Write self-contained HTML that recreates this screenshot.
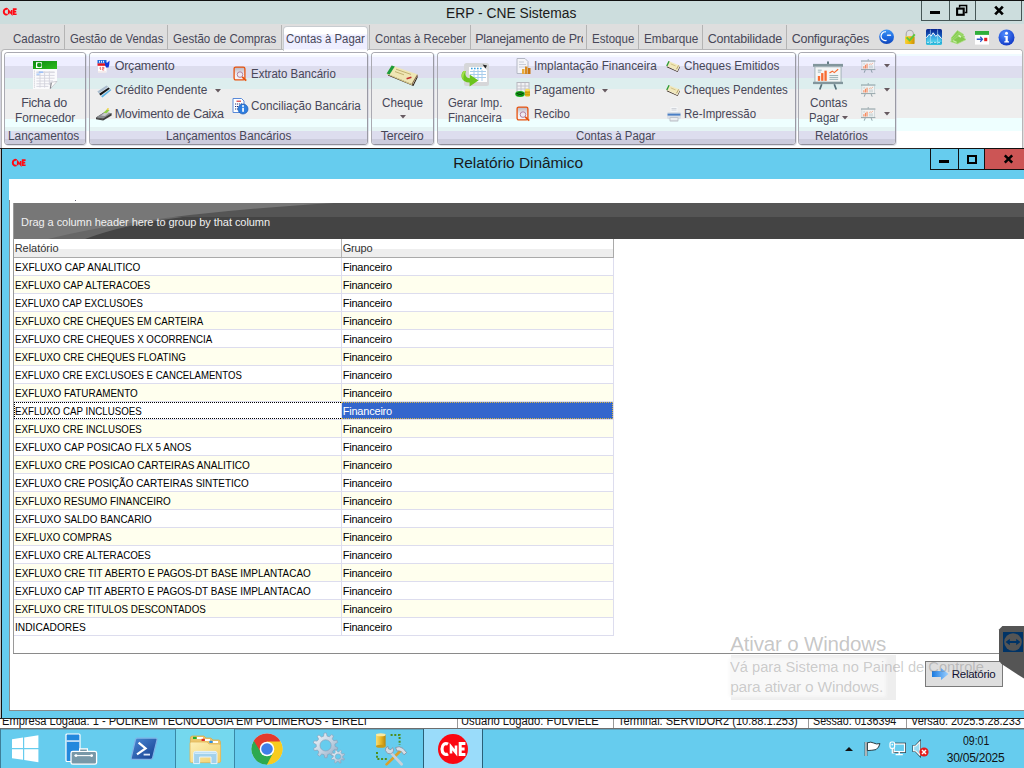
<!DOCTYPE html><html><head><meta charset="utf-8"><title>ERP - CNE Sistemas</title><style>
html,body{margin:0;padding:0;}
body{width:1024px;height:768px;overflow:hidden;background:#fff;position:relative;
 font-family:"Liberation Sans",sans-serif;}
.a{position:absolute;}
.t{position:absolute;white-space:nowrap;line-height:1;font-family:"Liberation Sans",sans-serif;}
svg{position:absolute;overflow:visible;}
.grp{position:absolute;top:52px;height:93px;border:1px solid #aaaab2;border-bottom-color:#90909a;border-right-color:#9a9aa4;border-radius:4px;box-sizing:border-box;
 box-shadow:inset 1px 1px 0 rgba(255,255,255,.9), 1px 1px 0 rgba(200,200,215,.5);overflow:hidden;}
.grp i{position:absolute;left:0;right:0;display:block;}
.sep{position:absolute;top:25px;width:1px;height:24px;background:#b4b4b4;}
.row{position:absolute;left:14px;width:599px;height:17px;border-bottom:1px solid #ddddee;}
.row b{position:absolute;left:327px;top:0;width:1px;height:18px;background:#ddddee;}
.alt{background:#ffffee;}
</style></head><body><div class="a" style="left:0px;top:0px;width:1024px;height:1px;background:#111;"></div><div class="a" style="left:0px;top:1px;width:1024px;height:23px;background:#ccdddd;"></div><svg style="left:3px;top:8px" width="14" height="7.4" viewBox="0 0 14 8" preserveAspectRatio="none"><path d="M4.6 1.2C3 .3 .8 1.4 .8 4s2.2 3.7 3.8 2.8" fill="none" stroke="#ff0a14" stroke-width="2"/><path d="M5.7 6.8V2.8L8.7 6.4V2.2" fill="none" stroke="#ff0a14" stroke-width="1.6"/><path d="M13.6 1.2H10.7V6.8H13.6M10.7 4H13.2" fill="none" stroke="#ff0a14" stroke-width="1.8"/></svg><span class="t" style="left:446.20px;top:4.88px;font-size:15.5px;color:#1a1a1a;transform:scaleX(0.8916);transform-origin:0 0;">ERP - CNE Sistemas</span><div class="a" style="left:921px;top:1px;width:101px;height:20px;border:1px solid #465656;border-top:none;box-sizing:border-box;"></div><div class="a" style="left:949px;top:1px;width:1px;height:20px;background:#465656;"></div><div class="a" style="left:975px;top:1px;width:1px;height:20px;background:#465656;"></div><div class="a" style="left:930px;top:11px;width:10px;height:3px;background:#000;"></div><svg style="left:956px;top:4px" width="12" height="12"><path d="M3.6 3.6V1.4H10.6V8.4H8.6" fill="none" stroke="#000" stroke-width="1.5"/><rect x="1.1" y="4.6" width="6.6" height="6.2" fill="none" stroke="#000" stroke-width="2.1"/></svg><svg style="left:994px;top:6px" width="10" height="9"><path d="M1.2 .6L8.8 8.4M8.8 .6L1.2 8.4" stroke="#000" stroke-width="2.7"/></svg>
<div class="a" style="left:0px;top:24px;width:1024px;height:26px;background:#dedede;"></div><div class="sep" style="left:64px"></div><div class="sep" style="left:167px"></div><div class="sep" style="left:281px"></div><div class="sep" style="left:369px"></div><div class="sep" style="left:470px"></div><div class="sep" style="left:586px"></div><div class="sep" style="left:638px"></div><div class="sep" style="left:702px"></div><div class="sep" style="left:786px"></div><span class="t" style="left:12.70px;top:33.42px;font-size:12.5px;color:#474758;transform:scaleX(0.9225);transform-origin:0 0;">Cadastro</span><span class="t" style="left:69.70px;top:33.42px;font-size:12.5px;color:#474758;transform:scaleX(0.9071);transform-origin:0 0;">Gestão de Vendas</span><span class="t" style="left:172.70px;top:33.42px;font-size:12.5px;color:#474758;transform:scaleX(0.9235);transform-origin:0 0;">Gestão de Compras</span><span class="t" style="left:374.70px;top:33.42px;font-size:12.5px;color:#474758;transform:scaleX(0.9061);transform-origin:0 0;">Contas à Receber</span><span class="t" style="left:591.70px;top:33.42px;font-size:12.5px;color:#474758;transform:scaleX(0.9221);transform-origin:0 0;">Estoque</span><span class="t" style="left:643.70px;top:33.42px;font-size:12.5px;color:#474758;transform:scaleX(0.9413);transform-origin:0 0;">Embarque</span><span class="t" style="left:707.70px;top:33.42px;font-size:12.5px;color:#474758;letter-spacing:-0.166px;">Contabilidade</span><span class="t" style="left:791.70px;top:33.42px;font-size:12.5px;color:#474758;letter-spacing:-0.255px;">Configurações</span><div class="a" style="left:470px;top:26px;width:112.7px;height:24px;overflow:hidden;"><span class="t" style="left:5.20px;top:7.42px;font-size:12.5px;color:#474758;letter-spacing:-0.234px;">Planejamento de Pro</span></div><svg style="left:879px;top:29px" width="16" height="16"><defs><linearGradient id="gb" x1="0" y1="0" x2="0" y2="1"><stop offset="0" stop-color="#3f96f4"/><stop offset=".55" stop-color="#1c68e0"/><stop offset="1" stop-color="#1246b8"/></linearGradient></defs><ellipse cx="7.6" cy="7.8" rx="7.4" ry="7.2" fill="url(#gb)"/><path d="M7 2.8A4.4 4.4 0 1 0 7.6 11.4" fill="none" stroke="#fff" stroke-width="1.2"/><rect x="7.8" y="5.4" width="4.4" height="1.7" rx=".8" fill="#e8f0ff"/></svg><svg style="left:902px;top:29px" width="15" height="16"><defs><linearGradient id="lk" x1="0" x2="1"><stop offset="0" stop-color="#f6d23a"/><stop offset=".5" stop-color="#eeb80e"/><stop offset="1" stop-color="#c8920a"/></linearGradient></defs><path d="M4.2 7.6V5A3.6 3.8 0 0 1 11.4 5V7.6" fill="none" stroke="#a8a8a8" stroke-width="1.1"/><rect x="3" y="7.2" width="9.6" height="7.8" rx=".8" fill="url(#lk)"/><path d="M4.6 8.4L7.6 11.4 12.8 5.4" fill="none" stroke="#5cc83c" stroke-width="1.9"/></svg><svg style="left:926px;top:29px" width="16" height="16"><defs><linearGradient id="ch" x1="0" y1="0" x2="0" y2="1"><stop offset="0" stop-color="#0a2690"/><stop offset=".5" stop-color="#1460c0"/><stop offset="1" stop-color="#34c8e0"/></linearGradient><linearGradient id="ch2" x1="0" y1="0" x2="0" y2="1"><stop offset="0" stop-color="#2a86dc"/><stop offset="1" stop-color="#52d4ec"/></linearGradient></defs><rect x="0" y="0" width="16" height="16" rx="1.6" fill="url(#ch)"/><path d="M.4 8.8L3.2 5.2 5 7.2 7.2 3.8 9.8 7.4 11.8 5.4 15.6 9.6V13H.4Z" fill="url(#ch2)"/><path d="M.4 8.8L3.2 5.2 5 7.2 7.2 3.8 9.8 7.4 11.8 5.4 15.6 9.6" fill="none" stroke="#fff" stroke-width="1"/><path d="M4.4 .6V15M11.6 .6V15" stroke="#bfe6f6" stroke-width=".6"/><path d="M.8 13.4H15.2" stroke="#c8f4f8" stroke-width=".9" stroke-dasharray="2.4 1.2"/></svg><svg style="left:950px;top:30px" width="17" height="14"><g stroke="#a6dc78" stroke-width=".7"><path d="M1 8.2L7.4 .6 13.6 4.4 7.2 12Z" fill="#86cc50"/><path d="M.8 10L8.8 2.6 15 6.8 7 13.2Z" fill="#8ed25a"/><path d="M.6 11.6L10.4 5 16 9.6 7.4 13.8Z" fill="#84ca4e"/></g><path d="M8.4 5.2L10.6 6.8M3 10.6L6.6 12.4" stroke="#c6eca4" stroke-width="1.2"/><rect x="8.6" y="5.6" width="2.6" height="1.6" fill="#d8f4c0" transform="rotate(35 9.9 6.4)"/></svg><svg style="left:974.5px;top:30.6px" width="14" height="13.6" viewBox="0 0 16 14" preserveAspectRatio="none"><rect x="0" y="0" width="16" height="14" fill="#fff"/><rect x="0" y="0" width="16" height="4" fill="#2fae3a"/><path d="M2 8.5H8M6 6L8.5 8.5 6 11" fill="none" stroke="#2a55c8" stroke-width="1.4"/><rect x="10.5" y="7" width="3.5" height="3.5" fill="#e02020"/></svg><svg style="left:998px;top:29px" width="17" height="17"><defs><radialGradient id="gi" cx=".4" cy=".3" r=".8"><stop offset="0" stop-color="#4f8dff"/><stop offset="1" stop-color="#0a2fc0"/></radialGradient></defs><circle cx="8.5" cy="8.5" r="8" fill="url(#gi)"/><circle cx="8.5" cy="4.3" r="1.5" fill="#fff"/><path d="M6.3 7H9.8V12.3H11V13.6H6.3V12.3H7.5V8.3H6.3Z" fill="#fff"/></svg>
<div class="a" style="left:0px;top:49px;width:1024px;height:99px;background:#dedede;"></div><div class="a" style="left:0px;top:52px;width:1px;height:96px;background:#d2d2de;"></div><div class="a" style="left:1px;top:49px;width:1022px;height:99px;background:#fff;border:1px solid #b6b6b8;border-bottom:none;border-radius:4px 4px 0 0;overflow:hidden;box-sizing:border-box;"><div class="a" style="left:2px;right:0;top:0px;height:4px;background:#ffffff"></div><div class="a" style="left:2px;right:0;top:4px;height:2px;background:#f0fbff"></div><div class="a" style="left:2px;right:0;top:6px;height:10px;background:#eeeeff"></div><div class="a" style="left:2px;right:0;top:16px;height:12px;background:#ddddee"></div><div class="a" style="left:2px;right:0;top:28px;height:11px;background:#ddeeee"></div><div class="a" style="left:2px;right:0;top:39px;height:29px;background:#eeeeee"></div><div class="a" style="left:2px;right:0;top:68px;height:13px;background:#eeffff"></div><div class="a" style="left:2px;right:0;top:81px;height:17px;background:#ffffff"></div></div><div class="grp" style="left:4px;width:82px"><i style="top:0px;height:2px;background:#ffffff"></i><i style="top:2px;height:2px;background:#f6f9ff"></i><i style="top:4px;height:9px;background:#eeeeff"></i><i style="top:13px;height:12px;background:#ddddee"></i><i style="top:25px;height:11px;background:#ddeeee"></i><i style="top:36px;height:30px;background:#eeeeee"></i><i style="top:66px;height:8px;background:#eeffff"></i><i style="top:74px;height:4px;background:#e4f3f3"></i><i style="top:78px;height:8px;background:#ddddee"></i><i style="top:86px;height:5px;background:#ccccdd"></i></div><div class="grp" style="left:89px;width:279px"><i style="top:0px;height:2px;background:#ffffff"></i><i style="top:2px;height:2px;background:#f6f9ff"></i><i style="top:4px;height:9px;background:#eeeeff"></i><i style="top:13px;height:12px;background:#ddddee"></i><i style="top:25px;height:11px;background:#ddeeee"></i><i style="top:36px;height:30px;background:#eeeeee"></i><i style="top:66px;height:8px;background:#eeffff"></i><i style="top:74px;height:4px;background:#e4f3f3"></i><i style="top:78px;height:8px;background:#ddddee"></i><i style="top:86px;height:5px;background:#ccccdd"></i></div><div class="grp" style="left:371px;width:63px"><i style="top:0px;height:2px;background:#ffffff"></i><i style="top:2px;height:2px;background:#f6f9ff"></i><i style="top:4px;height:9px;background:#eeeeff"></i><i style="top:13px;height:12px;background:#ddddee"></i><i style="top:25px;height:11px;background:#ddeeee"></i><i style="top:36px;height:30px;background:#eeeeee"></i><i style="top:66px;height:8px;background:#eeffff"></i><i style="top:74px;height:4px;background:#e4f3f3"></i><i style="top:78px;height:8px;background:#ddddee"></i><i style="top:86px;height:5px;background:#ccccdd"></i></div><div class="grp" style="left:437px;width:359px"><i style="top:0px;height:2px;background:#ffffff"></i><i style="top:2px;height:2px;background:#f6f9ff"></i><i style="top:4px;height:9px;background:#eeeeff"></i><i style="top:13px;height:12px;background:#ddddee"></i><i style="top:25px;height:11px;background:#ddeeee"></i><i style="top:36px;height:30px;background:#eeeeee"></i><i style="top:66px;height:8px;background:#eeffff"></i><i style="top:74px;height:4px;background:#e4f3f3"></i><i style="top:78px;height:8px;background:#ddddee"></i><i style="top:86px;height:5px;background:#ccccdd"></i></div><div class="grp" style="left:798px;width:98px"><i style="top:0px;height:2px;background:#ffffff"></i><i style="top:2px;height:2px;background:#f6f9ff"></i><i style="top:4px;height:9px;background:#eeeeff"></i><i style="top:13px;height:12px;background:#ddddee"></i><i style="top:25px;height:11px;background:#ddeeee"></i><i style="top:36px;height:30px;background:#eeeeee"></i><i style="top:66px;height:8px;background:#eeffff"></i><i style="top:74px;height:4px;background:#e4f3f3"></i><i style="top:78px;height:8px;background:#ddddee"></i><i style="top:86px;height:5px;background:#ccccdd"></i></div><span class="t" style="left:7.70px;top:130.42px;font-size:12.5px;color:#474758;transform:scaleX(0.9499);transform-origin:0 0;">Lançamentos</span><span class="t" style="left:165.70px;top:130.42px;font-size:12.5px;color:#474758;transform:scaleX(0.9343);transform-origin:0 0;">Lançamentos Bancários</span><span class="t" style="left:380.70px;top:130.42px;font-size:12.5px;color:#474758;letter-spacing:-0.209px;">Terceiro</span><span class="t" style="left:575.70px;top:130.42px;font-size:12.5px;color:#474758;transform:scaleX(0.9130);transform-origin:0 0;">Contas à Pagar</span><span class="t" style="left:815.20px;top:130.42px;font-size:12.5px;color:#474758;transform:scaleX(0.9381);transform-origin:0 0;">Relatórios</span><span class="t" style="left:21.20px;top:97.42px;font-size:12.5px;color:#474758;letter-spacing:-0.269px;">Ficha do</span><span class="t" style="left:14.70px;top:112.42px;font-size:12.5px;color:#474758;transform:scaleX(0.9431);transform-origin:0 0;">Fornecedor</span><span class="t" style="left:114.70px;top:60.42px;font-size:12.5px;color:#474758;letter-spacing:-0.227px;">Orçamento</span><span class="t" style="left:114.70px;top:84.42px;font-size:12.5px;color:#474758;transform:scaleX(0.9486);transform-origin:0 0;">Crédito Pendente</span><span class="t" style="left:114.70px;top:108.42px;font-size:12.5px;color:#474758;letter-spacing:-0.272px;">Movimento de Caixa</span><svg style="left:214.5px;top:89px" width="6" height="3.5"><path d="M0 0H6 L3 3.5Z" fill="#665a60"/></svg><span class="t" style="left:250.70px;top:68.42px;font-size:12.5px;color:#474758;transform:scaleX(0.9175);transform-origin:0 0;">Extrato Bancário</span><span class="t" style="left:250.70px;top:100.42px;font-size:12.5px;color:#474758;transform:scaleX(0.9350);transform-origin:0 0;">Conciliação Bancária</span><span class="t" style="left:381.95px;top:97.42px;font-size:12.5px;color:#474758;transform:scaleX(0.9373);transform-origin:0 0;">Cheque</span><svg style="left:399.5px;top:115px" width="6" height="3.5"><path d="M0 0H6 L3 3.5Z" fill="#665a60"/></svg><span class="t" style="left:447.70px;top:97.42px;font-size:12.5px;color:#474758;transform:scaleX(0.9088);transform-origin:0 0;">Gerar Imp.</span><span class="t" style="left:447.70px;top:112.42px;font-size:12.5px;color:#474758;transform:scaleX(0.9216);transform-origin:0 0;">Financeira</span><span class="t" style="left:533.70px;top:60.42px;font-size:12.5px;color:#474758;transform:scaleX(0.9451);transform-origin:0 0;">Implantação Financeira</span><span class="t" style="left:533.70px;top:84.42px;font-size:12.5px;color:#474758;transform:scaleX(0.9509);transform-origin:0 0;">Pagamento</span><svg style="left:602px;top:89px" width="6" height="3.5"><path d="M0 0H6 L3 3.5Z" fill="#665a60"/></svg><span class="t" style="left:533.70px;top:108.42px;font-size:12.5px;color:#474758;transform:scaleX(0.9198);transform-origin:0 0;">Recibo</span><span class="t" style="left:683.70px;top:60.42px;font-size:12.5px;color:#474758;transform:scaleX(0.9394);transform-origin:0 0;">Cheques Emitidos</span><span class="t" style="left:683.70px;top:84.42px;font-size:12.5px;color:#474758;transform:scaleX(0.9163);transform-origin:0 0;">Cheques Pendentes</span><span class="t" style="left:683.70px;top:108.42px;font-size:12.5px;color:#474758;transform:scaleX(0.9178);transform-origin:0 0;">Re-Impressão</span><span class="t" style="left:809.70px;top:97.42px;font-size:12.5px;color:#474758;transform:scaleX(0.9417);transform-origin:0 0;">Contas</span><span class="t" style="left:809.20px;top:112.42px;font-size:12.5px;color:#474758;transform:scaleX(0.9083);transform-origin:0 0;">Pagar</span><svg style="left:842px;top:116px" width="6" height="3.5"><path d="M0 0H6 L3 3.5Z" fill="#665a60"/></svg><svg style="left:883.5px;top:64px" width="6" height="3.5"><path d="M0 0H6 L3 3.5Z" fill="#665a60"/></svg><svg style="left:883.5px;top:88px" width="6" height="3.5"><path d="M0 0H6 L3 3.5Z" fill="#665a60"/></svg><svg style="left:883.5px;top:112px" width="6" height="3.5"><path d="M0 0H6 L3 3.5Z" fill="#665a60"/></svg><svg style="left:33px;top:61px" width="25" height="29"><defs><linearGradient id="gh" x1="0" y1="0" x2="1" y2="1"><stop offset="0" stop-color="#0c8a10"/><stop offset="1" stop-color="#2cbc1c"/></linearGradient></defs><path d="M0 8H24V20.4L17.2 28H0Z" fill="#fbfbfd"/><rect x="0" y="0" width="24" height="8" fill="url(#gh)"/><rect x="3" y="1.2" width="5.8" height="5.8" fill="#fff"/><circle cx="6.2" cy="4" r="2.3" fill="#139a16"/><path d="M3.4 11.6H21.6M3.4 14.4H21.6M3.4 17.2H21.6M3.4 20H20M3.4 22.8H17.6M3.4 25.4H15.4M7 10.4V26.6M11.6 10.4V26.6M16.4 10.4V24" stroke="#d2d2dc" stroke-width=".9"/><rect x="3.4" y="10.4" width="18.2" height="1.4" fill="#dadae2"/><rect x="5.8" y="10.4" width="4.4" height="1.6" fill="#9cc0f8"/><rect x="3.4" y="12.4" width="3.2" height="1.8" fill="#b4d0fa"/><path d="M1.4 9.6V27" stroke="#c4c4cc" stroke-width="1" stroke-dasharray="1 1"/><path d="M17.2 28L17.6 21.4 24 20.4Z" fill="#fff" stroke="#b8b8c0" stroke-width=".7"/><path d="M17.4 27.4L18.4 21.8" stroke="#77777f" stroke-width=".9"/></svg><svg style="left:97px;top:59.5px" width="13" height="13"><rect x="1" y="3" width="8.5" height="9.5" fill="#fff"/><rect x="0.5" y="0" width="9" height="3.6" fill="#1c6ce2"/><path d="M2.5 .8V2.6M4.5 .8V2.6M6.5 .8V2.6" stroke="#fff" stroke-width=".9"/><rect x="0.5" y="3.4" width="9" height="2.4" fill="#e4121f"/><path d="M8 1.5L10 3 12.6 .6 12.2 5 11.5 7.6 9 7.4 8 5Z" fill="#1236d8"/><path d="M2.4 8.2L3.6 7.2V10M5 7.4H7V8.6H5.4V10H7.2" fill="none" stroke="#e86a6a" stroke-width=".9"/><rect x="1" y="11.3" width="8" height="1.2" fill="#f0e4e4"/></svg><svg style="left:96.5px;top:84.5px" width="15" height="13"><path d="M.4 6.6L9.6 .4 14.4 5 5.4 12.4Z" fill="#d5dde6"/><path d="M.4 6.6L9.6 .4 11 1.8 1.8 8.2Z" fill="#a9bccd"/><path d="M2.2 8.8L11.6 2.4 12.8 3.7 3.5 10.4Z" fill="#151515"/><path d="M4.2 11.2L13.5 4.2 14.4 5 5.4 12.4Z" fill="#58b4e6"/></svg><svg style="left:96px;top:107.5px" width="16" height="13"><path d="M0 9.6L8.4 4.2 15.6 5.2 15.6 7.4 7.2 12.6 0 11.2Z" fill="#3c3c3c"/><path d="M0 9.6L8.4 4.2 15.6 5.2 7.2 10.6Z" fill="#8b8f92"/><path d="M5 7.4L10.2 3.4 14 4 9 8Z" fill="#c9ccce"/><path d="M7.4 4.8L10.8 1.6 13.6 2.2 10.4 5.2Z" fill="#8fcf48"/><path d="M10.6 1.8L11.6 0 13 .6 12.2 2.2Z" fill="#f0d23c"/><path d="M1.2 10.2L7 11.4" stroke="#5a5a5a" stroke-width=".8"/></svg><svg style="left:233px;top:66px" width="15" height="16"><defs><linearGradient id="dg1" x1="0" y1="0" x2="0" y2="1"><stop offset="0" stop-color="#b9b5c0"/><stop offset=".6" stop-color="#f4f2f6"/></linearGradient></defs><rect x="1.1" y="1.1" width="10.8" height="12.8" rx="1.6" fill="url(#dg1)" stroke="#e8520e" stroke-width="1.3"/><circle cx="7" cy="8.6" r="2.8" fill="#efeaf2" stroke="#b080a0" stroke-width="1"/><path d="M9.2 10.8L13.2 14.6" stroke="#e8520e" stroke-width="1.7"/></svg><svg style="left:516px;top:106px" width="15" height="16"><defs><linearGradient id="dg2" x1="0" y1="0" x2="0" y2="1"><stop offset="0" stop-color="#b9b5c0"/><stop offset=".6" stop-color="#f4f2f6"/></linearGradient></defs><rect x="1.1" y="1.1" width="10.8" height="12.8" rx="1.6" fill="url(#dg2)" stroke="#e8520e" stroke-width="1.3"/><circle cx="7" cy="8.6" r="2.8" fill="#efeaf2" stroke="#b080a0" stroke-width="1"/><path d="M9.2 10.8L13.2 14.6" stroke="#e8520e" stroke-width="1.7"/></svg><svg style="left:232px;top:98px" width="17" height="17"><path d="M1 .5H9.5L12 3V14.5H1Z" fill="#fff" stroke="#5a8ad8" stroke-width="1"/><path d="M4.5 3.2H9" stroke="#d02020" stroke-width="1.1"/><path d="M3 6H10M3 8.5H7M3 11H6" stroke="#22307a" stroke-width="1.1" stroke-dasharray="1.2 .8"/><circle cx="11" cy="11" r="5" fill="#2f7fe0" stroke="#1b58b0" stroke-width=".7"/><rect x="10.2" y="9.8" width="1.7" height="4" fill="#fff"/><circle cx="11" cy="8" r="1" fill="#fff"/></svg><svg style="left:386px;top:64.5px" width="33" height="21"><path d="M2 8.6L27 19.4 31.6 10.4 31.6 12.6 27.4 21 2 10.6Z" fill="#2a1c12"/><path d="M1 8.2L26 19 26 20.2 1 9.6Z" fill="#d8c98a"/><path d="M5.6 .4L31.2 9.2 25.6 18.8 .6 8.4Z" fill="#efe6b4"/><path d="M5.6 .4L8.8 1.5 3.6 9.6 .6 8.4Z" fill="#1d9a3c"/><path d="M10 4.2L25 9.4M9 6.6L18 9.8" stroke="#c2b272" stroke-width="1"/><path d="M20.6 13.8L25.4 12.2" stroke="#c23030" stroke-width="1.6"/><path d="M25.6 18.8L31.2 9.2 31.6 10.4 26.4 19.6Z" fill="#8a6a3a"/></svg><svg style="left:460px;top:62px" width="31" height="26"><rect x="4" y="1" width="25" height="23" rx="2.5" fill="#d6d7d9"/><path d="M9 5H24L27 8V20H9Z" fill="#fff"/><path d="M11 6.5H22" stroke="#3aa0e0" stroke-width="1.3" stroke-dasharray="1.6 1.4"/><path d="M10 9.5H26M10 12.5H26M10 15.5H26M14 8V19M18 8V19M22 8V19" stroke="#a8cdec" stroke-width="1"/><path d="M22.6 2.6L27 3.4 25.4 6.4Z" fill="#222"/><path d="M3.4 9C-.6 13 1.4 20.4 9.6 20.6V24.4L18.4 18.4 9.6 12.6V16.2C6 16 4.4 12.6 6 9Z" fill="#6ac41c"/><path d="M3.4 9C1.6 11.6 1.4 15.6 3.6 18 3 14.6 4 11.2 6 9Z" fill="#a2e04c"/></svg><svg style="left:516px;top:58px" width="15" height="17"><path d="M1 .5H9L12 3.5V15.5H1Z" fill="#f4f4f8" stroke="#b4b8c4" stroke-width="1"/><path d="M3 4H8M3 6.5H10M3 9H10" stroke="#c8ccd8" stroke-width="1"/><rect x="6" y="11" width="2.5" height="5" fill="#e8a83a"/><rect x="9" y="8.5" width="2.5" height="7.5" fill="#d88a22"/><rect x="12" y="10" width="2.5" height="6" fill="#c87412"/></svg><svg style="left:515px;top:82px" width="17" height="16"><rect x="2" y="0.5" width="12" height="10" fill="#f2f2f4" stroke="#b8b8c0" stroke-width="1"/><path d="M2 4H14M2 7H14M6 1V10M10 1V10" stroke="#c4c4cc" stroke-width="1"/><ellipse cx="5" cy="12" rx="4.8" ry="3" fill="#16b01a"/><path d="M1.4 12Q5 9.6 8.6 12M2.4 13.4Q5 11.6 7.6 13.4" fill="none" stroke="#0a3a0c" stroke-width="1.1"/><rect x="10" y="8" width="5" height="6.6" rx="1.4" fill="#e4b41c"/><ellipse cx="12.5" cy="8" rx="2.5" ry="1.3" fill="#f8dc64"/><path d="M10 10.4H15M10 12.4H15" stroke="#b8900e" stroke-width=".6"/></svg><svg style="left:665.6px;top:61px" width="14" height="10.5" viewBox="0 0 16 11" preserveAspectRatio="none"><path d="M1 5.6L13 10.8 15.8 5.6 15.8 6.8 13.3 11.6 1 6.6Z" fill="#3a2a1a"/><path d="M2.8 0L15.6 4.8 13 10.2 .2 5Z" fill="#f1e8bc"/><path d="M2.8 0L4.2 .5 1.6 5.6 .2 5Z" fill="#2a9a3a"/><path d="M5.4 3L11 5.2" stroke="#c9ba7c" stroke-width=".9"/><path d="M12 8.6L14.4 4.6" stroke="#a08850" stroke-width=".8"/></svg><svg style="left:665.6px;top:85px" width="14" height="10.5" viewBox="0 0 16 11" preserveAspectRatio="none"><path d="M1 5.6L13 10.8 15.8 5.6 15.8 6.8 13.3 11.6 1 6.6Z" fill="#3a2a1a"/><path d="M2.8 0L15.6 4.8 13 10.2 .2 5Z" fill="#f1e8bc"/><path d="M2.8 0L4.2 .5 1.6 5.6 .2 5Z" fill="#2a9a3a"/><path d="M5.4 3L11 5.2" stroke="#c9ba7c" stroke-width=".9"/><path d="M12 8.6L14.4 4.6" stroke="#a08850" stroke-width=".8"/></svg><svg style="left:666px;top:106px" width="16" height="16"><rect x="4.5" y="1" width="7" height="5.5" fill="#f4f6f8"/><path d="M5.5 2.5H10.5M5.5 4H10.5" stroke="#c8ccd2" stroke-width=".8"/><rect x="1" y="6" width="14" height="7.2" rx="1.8" fill="#d9dee5"/><rect x="1.6" y="7.6" width="12.8" height="2" fill="#4a7fc6"/><rect x="3.6" y="11.2" width="8.8" height="4.2" rx=".6" fill="#b9bec6"/><rect x="4.4" y="12" width="7.2" height="2.4" fill="#eceef1"/></svg><svg style="left:813px;top:61px;opacity:1" width="30" height="29" viewBox="0 0 31 29"><rect x="14.5" y="0" width="2" height="3" fill="#5f7880"/><rect x="0" y="2.5" width="31" height="3" fill="#82969c"/><rect x="2" y="5.5" width="27" height="16" fill="#f4f6f6" stroke="#9fb0b6" stroke-width="1"/><rect x="0" y="21" width="31" height="2.4" fill="#82969c"/><path d="M9 23.5L7 29M22 23.5L24 29" stroke="#56707a" stroke-width="1.8"/><rect x="5" y="15" width="2.4" height="5" fill="#f86a30"/><rect x="8.4" y="12" width="2.4" height="8" fill="#f86a30"/><rect x="11.8" y="9.5" width="2.4" height="10.5" fill="#f86a30"/><path d="M17 12L20 10 22 11.5 26 8" fill="none" stroke="#f86a30" stroke-width="1.2"/><path d="M17 14.5H26M17 16.5H26M17 18.5H26" stroke="#9ab0b4" stroke-width="1"/><path d="M5 9H9M5 11H8" stroke="#9ab0b4" stroke-width="1"/></svg><svg style="left:861px;top:59px;opacity:0.75" width="14.4" height="13.92" viewBox="0 0 31 29"><rect x="14.5" y="0" width="2" height="3" fill="#5f7880"/><rect x="0" y="2.5" width="31" height="3" fill="#82969c"/><rect x="2" y="5.5" width="27" height="16" fill="#f4f6f6" stroke="#9fb0b6" stroke-width="1"/><rect x="0" y="21" width="31" height="2.4" fill="#82969c"/><path d="M9 23.5L7 29M22 23.5L24 29" stroke="#56707a" stroke-width="1.8"/><rect x="5" y="15" width="2.4" height="5" fill="#f86a30"/><rect x="8.4" y="12" width="2.4" height="8" fill="#f86a30"/><rect x="11.8" y="9.5" width="2.4" height="10.5" fill="#f86a30"/><path d="M17 12L20 10 22 11.5 26 8" fill="none" stroke="#f86a30" stroke-width="1.2"/><path d="M17 14.5H26M17 16.5H26M17 18.5H26" stroke="#9ab0b4" stroke-width="1"/><path d="M5 9H9M5 11H8" stroke="#9ab0b4" stroke-width="1"/></svg><svg style="left:861px;top:83px;opacity:0.75" width="14.4" height="13.92" viewBox="0 0 31 29"><rect x="14.5" y="0" width="2" height="3" fill="#5f7880"/><rect x="0" y="2.5" width="31" height="3" fill="#82969c"/><rect x="2" y="5.5" width="27" height="16" fill="#f4f6f6" stroke="#9fb0b6" stroke-width="1"/><rect x="0" y="21" width="31" height="2.4" fill="#82969c"/><path d="M9 23.5L7 29M22 23.5L24 29" stroke="#56707a" stroke-width="1.8"/><rect x="5" y="15" width="2.4" height="5" fill="#f86a30"/><rect x="8.4" y="12" width="2.4" height="8" fill="#f86a30"/><rect x="11.8" y="9.5" width="2.4" height="10.5" fill="#f86a30"/><path d="M17 12L20 10 22 11.5 26 8" fill="none" stroke="#f86a30" stroke-width="1.2"/><path d="M17 14.5H26M17 16.5H26M17 18.5H26" stroke="#9ab0b4" stroke-width="1"/><path d="M5 9H9M5 11H8" stroke="#9ab0b4" stroke-width="1"/></svg><svg style="left:861px;top:107px;opacity:0.75" width="14.4" height="13.92" viewBox="0 0 31 29"><rect x="14.5" y="0" width="2" height="3" fill="#5f7880"/><rect x="0" y="2.5" width="31" height="3" fill="#82969c"/><rect x="2" y="5.5" width="27" height="16" fill="#f4f6f6" stroke="#9fb0b6" stroke-width="1"/><rect x="0" y="21" width="31" height="2.4" fill="#82969c"/><path d="M9 23.5L7 29M22 23.5L24 29" stroke="#56707a" stroke-width="1.8"/><rect x="5" y="15" width="2.4" height="5" fill="#f86a30"/><rect x="8.4" y="12" width="2.4" height="8" fill="#f86a30"/><rect x="11.8" y="9.5" width="2.4" height="10.5" fill="#f86a30"/><path d="M17 12L20 10 22 11.5 26 8" fill="none" stroke="#f86a30" stroke-width="1.2"/><path d="M17 14.5H26M17 16.5H26M17 18.5H26" stroke="#9ab0b4" stroke-width="1"/><path d="M5 9H9M5 11H8" stroke="#9ab0b4" stroke-width="1"/></svg>
<div class="a" style="left:283px;top:26px;width:85px;height:25px;background:linear-gradient(#fff 0,#fff 7px,#eeeeff 8px,#eeeeff 22px,#fff 23px);border:1px solid #c8ccd0;border-bottom:none;border-radius:4px 4px 0 0;box-sizing:border-box;"></div><span class="t" style="left:285.70px;top:33.42px;font-size:12.5px;color:#474758;transform:scaleX(0.9072);transform-origin:0 0;">Contas à Pagar</span>
<div class="a" style="left:0px;top:148px;width:1024px;height:1px;background:#262626;"></div><div class="a" style="left:1px;top:148px;width:1px;height:571px;background:#111;"></div><div class="a" style="left:2px;top:149px;width:1022px;height:569px;background:#66ccee;"></div><div class="a" style="left:0px;top:149px;width:1px;height:569px;background:#c0c0c0;"></div><svg style="left:12px;top:159px" width="14" height="7.4" viewBox="0 0 14 8" preserveAspectRatio="none"><path d="M4.6 1.2C3 .3 .8 1.4 .8 4s2.2 3.7 3.8 2.8" fill="none" stroke="#ff0a14" stroke-width="2"/><path d="M5.7 6.8V2.8L8.7 6.4V2.2" fill="none" stroke="#ff0a14" stroke-width="1.6"/><path d="M13.6 1.2H10.7V6.8H13.6M10.7 4H13.2" fill="none" stroke="#ff0a14" stroke-width="1.8"/></svg><span class="t" style="left:453.20px;top:155.38px;font-size:15.5px;color:#1a1a1a;letter-spacing:-0.064px;">Relatório Dinâmico</span><div class="a" style="left:985px;top:149px;width:39px;height:20px;background:#cc5555;"></div><div class="a" style="left:930px;top:148px;width:95px;height:22px;border:1px solid #111;box-sizing:border-box;"></div><div class="a" style="left:958px;top:149px;width:1px;height:20px;background:#111;"></div><div class="a" style="left:984px;top:149px;width:1px;height:20px;background:#111;"></div><div class="a" style="left:939px;top:160px;width:10px;height:3px;background:#000;"></div><div class="a" style="left:967px;top:155px;width:10px;height:8.5px;border:2px solid #000;box-sizing:border-box;"></div><svg style="left:1003.5px;top:155.3px" width="9" height="8"><path d="M.8 .3L8.2 7.7M8.2 .3L.8 7.7" stroke="#000" stroke-width="2.5"/></svg><div class="a" style="left:9px;top:179px;width:1015px;height:532px;background:#fff;"></div><div class="a" style="left:9px;top:200px;width:1px;height:511px;background:#8a8a8a;"></div><div class="a" style="left:9px;top:710px;width:1015px;height:1px;background:#8a8a8a;"></div><div class="a" style="left:75px;top:200px;width:1px;height:1px;background:#667;"></div>
<svg style="left:13px;top:203px" width="1011" height="36" viewBox="13 203 1011 36"><rect x="13" y="203" width="1011" height="36" fill="#444"/><rect x="13" y="203" width="1011" height="14" fill="#555"/><path d="M13 217H183Q125 224 85 239H13Z" fill="#666"/><path d="M13 203H334Q150 214 48 239H13Z" fill="#777"/></svg><span class="t" style="left:21.00px;top:216.69px;font-size:11px;color:#f0f0f0;letter-spacing:-0.060px;">Drag a column header here to group by that column</span><div class="a" style="left:13px;top:203px;width:1px;height:451px;background:#9a9a9a;"></div><div class="a" style="left:13px;top:653px;width:1011px;height:1px;background:#8a8a8a;"></div><div class="a" style="left:14px;top:239px;width:599px;height:10px;background:#fff;"></div><div class="a" style="left:14px;top:249px;width:599px;height:8px;background:#eeeeee;"></div><div class="a" style="left:14px;top:257px;width:600px;height:1px;background:#aaaaaa;"></div><div class="a" style="left:341px;top:239px;width:1px;height:18px;background:#b4b4b4;"></div><div class="a" style="left:613px;top:239px;width:1px;height:18px;background:#aaaaaa;"></div><div class="a" style="left:613px;top:258px;width:1px;height:378px;background:#ddddee;"></div><span class="t" style="left:14.70px;top:242.69px;font-size:11px;color:#333;letter-spacing:-0.026px;">Relatório</span><span class="t" style="left:342.70px;top:242.69px;font-size:11px;color:#333;letter-spacing:-0.156px;">Grupo</span><div class="row" style="top:258px"><b></b></div><span class="t" style="left:14.70px;top:262.19px;font-size:11px;color:#000;transform:scaleX(0.9123);transform-origin:0 0;">EXFLUXO CAP ANALITICO</span><span class="t" style="left:342.70px;top:262.19px;font-size:11px;color:#000;letter-spacing:-0.206px;">Financeiro</span><div class="row alt" style="top:276px"><b></b></div><span class="t" style="left:14.70px;top:280.19px;font-size:11px;color:#000;transform:scaleX(0.8877);transform-origin:0 0;">EXFLUXO CAP ALTERACOES</span><span class="t" style="left:342.70px;top:280.19px;font-size:11px;color:#000;letter-spacing:-0.206px;">Financeiro</span><div class="row" style="top:294px"><b></b></div><span class="t" style="left:14.70px;top:298.19px;font-size:11px;color:#000;transform:scaleX(0.8686);transform-origin:0 0;">EXFLUXO CAP EXCLUSOES</span><span class="t" style="left:342.70px;top:298.19px;font-size:11px;color:#000;letter-spacing:-0.206px;">Financeiro</span><div class="row alt" style="top:312px"><b></b></div><span class="t" style="left:14.70px;top:316.19px;font-size:11px;color:#000;transform:scaleX(0.8835);transform-origin:0 0;">EXFLUXO CRE CHEQUES EM CARTEIRA</span><span class="t" style="left:342.70px;top:316.19px;font-size:11px;color:#000;letter-spacing:-0.206px;">Financeiro</span><div class="row" style="top:330px"><b></b></div><span class="t" style="left:14.70px;top:334.19px;font-size:11px;color:#000;transform:scaleX(0.8844);transform-origin:0 0;">EXFLUXO CRE CHEQUES X OCORRENCIA</span><span class="t" style="left:342.70px;top:334.19px;font-size:11px;color:#000;letter-spacing:-0.206px;">Financeiro</span><div class="row alt" style="top:348px"><b></b></div><span class="t" style="left:14.70px;top:352.19px;font-size:11px;color:#000;transform:scaleX(0.8881);transform-origin:0 0;">EXFLUXO CRE CHEQUES FLOATING</span><span class="t" style="left:342.70px;top:352.19px;font-size:11px;color:#000;letter-spacing:-0.206px;">Financeiro</span><div class="row" style="top:366px"><b></b></div><span class="t" style="left:14.70px;top:370.19px;font-size:11px;color:#000;transform:scaleX(0.8716);transform-origin:0 0;">EXFLUXO CRE EXCLUSOES E CANCELAMENTOS</span><span class="t" style="left:342.70px;top:370.19px;font-size:11px;color:#000;letter-spacing:-0.206px;">Financeiro</span><div class="row alt" style="top:384px"><b></b></div><span class="t" style="left:14.70px;top:388.19px;font-size:11px;color:#000;transform:scaleX(0.8995);transform-origin:0 0;">EXFLUXO FATURAMENTO</span><span class="t" style="left:342.70px;top:388.19px;font-size:11px;color:#000;letter-spacing:-0.206px;">Financeiro</span><div class="row" style="top:402px"><b></b></div><div class="a" style="left:342px;top:402px;width:271px;height:17px;background:#3366cc;"></div><div class="a" style="left:14px;top:402px;width:327px;height:17px;border:1px dotted #000;border-right:none;box-sizing:border-box;"></div><div class="a" style="left:341px;top:402px;width:272px;height:17px;border:1px dotted #d8b848;border-left:none;box-sizing:border-box;"></div><span class="t" style="left:14.70px;top:406.19px;font-size:11px;color:#000;transform:scaleX(0.8839);transform-origin:0 0;">EXFLUXO CAP INCLUSOES</span><span class="t" style="left:342.70px;top:406.19px;font-size:11px;color:#fff;letter-spacing:-0.206px;">Financeiro</span><div class="row alt" style="top:420px"><b></b></div><span class="t" style="left:14.70px;top:424.19px;font-size:11px;color:#000;transform:scaleX(0.8789);transform-origin:0 0;">EXFLUXO CRE INCLUSOES</span><span class="t" style="left:342.70px;top:424.19px;font-size:11px;color:#000;letter-spacing:-0.206px;">Financeiro</span><div class="row" style="top:438px"><b></b></div><span class="t" style="left:14.70px;top:442.19px;font-size:11px;color:#000;transform:scaleX(0.8993);transform-origin:0 0;">EXFLUXO CAP POSICAO FLX 5 ANOS</span><span class="t" style="left:342.70px;top:442.19px;font-size:11px;color:#000;letter-spacing:-0.206px;">Financeiro</span><div class="row alt" style="top:456px"><b></b></div><span class="t" style="left:14.70px;top:460.19px;font-size:11px;color:#000;transform:scaleX(0.9131);transform-origin:0 0;">EXFLUXO CRE POSICAO CARTEIRAS ANALITICO</span><span class="t" style="left:342.70px;top:460.19px;font-size:11px;color:#000;letter-spacing:-0.206px;">Financeiro</span><div class="row" style="top:474px"><b></b></div><span class="t" style="left:14.70px;top:478.19px;font-size:11px;color:#000;transform:scaleX(0.9049);transform-origin:0 0;">EXFLUXO CRE POSIÇÃO CARTEIRAS SINTETICO</span><span class="t" style="left:342.70px;top:478.19px;font-size:11px;color:#000;letter-spacing:-0.206px;">Financeiro</span><div class="row alt" style="top:492px"><b></b></div><span class="t" style="left:14.70px;top:496.19px;font-size:11px;color:#000;transform:scaleX(0.8976);transform-origin:0 0;">EXFLUXO RESUMO FINANCEIRO</span><span class="t" style="left:342.70px;top:496.19px;font-size:11px;color:#000;letter-spacing:-0.206px;">Financeiro</span><div class="row" style="top:510px"><b></b></div><span class="t" style="left:14.70px;top:514.19px;font-size:11px;color:#000;transform:scaleX(0.8987);transform-origin:0 0;">EXFLUXO SALDO BANCARIO</span><span class="t" style="left:342.70px;top:514.19px;font-size:11px;color:#000;letter-spacing:-0.206px;">Financeiro</span><div class="row alt" style="top:528px"><b></b></div><span class="t" style="left:14.70px;top:532.19px;font-size:11px;color:#000;transform:scaleX(0.8798);transform-origin:0 0;">EXFLUXO COMPRAS</span><span class="t" style="left:342.70px;top:532.19px;font-size:11px;color:#000;letter-spacing:-0.206px;">Financeiro</span><div class="row" style="top:546px"><b></b></div><span class="t" style="left:14.70px;top:550.19px;font-size:11px;color:#000;transform:scaleX(0.8862);transform-origin:0 0;">EXFLUXO CRE ALTERACOES</span><span class="t" style="left:342.70px;top:550.19px;font-size:11px;color:#000;letter-spacing:-0.206px;">Financeiro</span><div class="row alt" style="top:564px"><b></b></div><span class="t" style="left:14.70px;top:568.19px;font-size:11px;color:#000;transform:scaleX(0.9033);transform-origin:0 0;">EXFLUXO CRE TIT ABERTO E PAGOS-DT BASE IMPLANTACAO</span><span class="t" style="left:342.70px;top:568.19px;font-size:11px;color:#000;letter-spacing:-0.206px;">Financeiro</span><div class="row" style="top:582px"><b></b></div><span class="t" style="left:14.70px;top:586.19px;font-size:11px;color:#000;transform:scaleX(0.9056);transform-origin:0 0;">EXFLUXO CAP TIT ABERTO E PAGOS-DT BASE IMPLANTACAO</span><span class="t" style="left:342.70px;top:586.19px;font-size:11px;color:#000;letter-spacing:-0.206px;">Financeiro</span><div class="row alt" style="top:600px"><b></b></div><span class="t" style="left:14.70px;top:604.19px;font-size:11px;color:#000;transform:scaleX(0.8910);transform-origin:0 0;">EXFLUXO CRE TITULOS DESCONTADOS</span><span class="t" style="left:342.70px;top:604.19px;font-size:11px;color:#000;letter-spacing:-0.206px;">Financeiro</span><div class="row" style="top:618px"><b></b></div><span class="t" style="left:14.70px;top:622.19px;font-size:11px;color:#000;transform:scaleX(0.9266);transform-origin:0 0;">INDICADORES</span><span class="t" style="left:342.70px;top:622.19px;font-size:11px;color:#000;letter-spacing:-0.206px;">Financeiro</span>
<div class="a" style="left:731px;top:655px;width:165px;height:45px;background:#eeeeee;"></div><div class="a" style="left:731px;top:660px;width:153px;height:35px;background:#f8f8f8;box-shadow:0 0 3px 2px #f8f8f8;"></div><div class="a" style="left:925px;top:661px;width:78px;height:26px;background:#dedede;border:1px solid #7a7a7a;box-sizing:border-box;"></div><svg style="left:932px;top:668px" width="17" height="12"><defs><linearGradient id="ar" x1="0" x2="1"><stop offset="0" stop-color="#1a7ae0"/><stop offset="1" stop-color="#9cd0ff"/></linearGradient></defs><path d="M0 3H9V0L16.5 6 9 12V9H0Z" fill="url(#ar)"/></svg><span class="t" style="left:951.70px;top:669.27px;font-size:11.5px;color:#101030;letter-spacing:-0.248px;">Relatório</span><span class="t" style="left:730.20px;top:633.65px;font-size:20.5px;color:rgba(120,120,120,.43);letter-spacing:-0.160px;">Ativar o Windows</span><span class="t" style="left:730.20px;top:658.88px;font-size:15.5px;color:rgba(120,120,120,.37);transform:scaleX(0.9471);transform-origin:0 0;">Vá para Sistema no Painel de Controle</span><span class="t" style="left:730.20px;top:678.88px;font-size:15.5px;color:rgba(120,120,120,.37);letter-spacing:-0.221px;">para ativar o Windows.</span><svg style="left:999px;top:626px" width="25" height="56"><path d="M3.4 0H25V52.6L2.6 38 0 35V3.4Z" fill="#555"/><rect x="4" y="6" width="20" height="20" fill="#003366"/><circle cx="14" cy="16" r="8.8" fill="#555"/><path d="M6.6 16L10.8 12.8V15H17.2V12.8L21.4 16 17.2 19.2V17H10.8V19.2Z" fill="#003366"/></svg>
<div class="a" style="left:0px;top:718px;width:1024px;height:1px;background:#222;"></div><div class="a" style="left:0px;top:719px;width:1024px;height:9px;background:#fff;"></div><div class="a" style="left:0;top:719px;width:1024px;height:9px;overflow:hidden;"><span class="t" style="left:2.20px;top:-3.98px;font-size:12.5px;color:#111;transform:scaleX(0.8875);transform-origin:0 0;">Empresa Logada: 1 - POLIKEM TECNOLOGIA EM POLIMEROS - EIRELI</span><span class="t" style="left:461.20px;top:-3.98px;font-size:12.5px;color:#111;transform:scaleX(0.8987);transform-origin:0 0;">Usuário Logado: FULVIELE</span><span class="t" style="left:618.20px;top:-3.98px;font-size:12.5px;color:#111;transform:scaleX(0.8812);transform-origin:0 0;">Terminal: SERVIDOR2 (10.88.1.253)</span><span class="t" style="left:812.70px;top:-3.98px;font-size:12.5px;color:#111;transform:scaleX(0.8560);transform-origin:0 0;">Sessão: 0136394</span><span class="t" style="left:910.70px;top:-3.98px;font-size:12.5px;color:#111;transform:scaleX(0.8727);transform-origin:0 0;">Versão: 2025.5.28.233</span><div class="a" style="left:457px;top:0px;width:1px;height:9px;background:#999;"></div><div class="a" style="left:613px;top:0px;width:1px;height:9px;background:#999;"></div><div class="a" style="left:808px;top:0px;width:1px;height:9px;background:#999;"></div><div class="a" style="left:906px;top:0px;width:1px;height:9px;background:#999;"></div></div>
<div class="a" style="left:0px;top:728px;width:1024px;height:40px;background:#66ccee;"></div><div class="a" style="left:0px;top:728px;width:1024px;height:1px;background:#6e6e6e;"></div><div class="a" style="left:0px;top:729px;width:1024px;height:1px;background:#5fa6c0;"></div><div class="a" style="left:0px;top:729px;width:1px;height:39px;background:#3e7e98;"></div><div class="a" style="left:176px;top:729px;width:58px;height:39px;background:#74d8ee;"></div><div class="a" style="left:175px;top:729px;width:1px;height:39px;background:#3a88a6;"></div><div class="a" style="left:234px;top:729px;width:1px;height:39px;background:#3a88a6;"></div><div class="a" style="left:424px;top:729px;width:58px;height:39px;background:#9adcfa;"></div><div class="a" style="left:423px;top:729px;width:1px;height:39px;background:#2a6078;"></div><div class="a" style="left:482px;top:729px;width:1px;height:39px;background:#2a6078;"></div><svg style="left:12px;top:735px" width="27" height="27"><path d="M0 4.2L11 2.6V13H0ZM12.2 2.4L26.4 .2V13H12.2ZM0 14.2H11V24.8L0 23.2ZM12.2 14.2H26.4V27.2L12.2 25Z" fill="#fff"/></svg><svg style="left:65px;top:733px" width="33" height="33"><rect x="1" y="1" width="14" height="27.5" rx="1" fill="#2288dd" stroke="#fff" stroke-width="1.2"/><rect x="1.6" y="7.4" width="12.8" height="1.3" fill="#fff"/><rect x="6" y="18.4" width="25.6" height="12.8" rx="1.8" fill="#7898a8" stroke="#fff" stroke-width="1.3"/><path d="M14.6 18V15.8H22.4V18" fill="#7898a8" stroke="#fff" stroke-width="1.2"/><path d="M9.5 22.6H28" stroke="#fff" stroke-width="1.1"/><circle cx="11" cy="22.6" r="1.4" fill="#fff"/><circle cx="26.6" cy="22.6" r="1.4" fill="#fff"/></svg><svg style="left:130px;top:737px" width="29" height="24"><defs><linearGradient id="psg" x1="0" y1="0" x2="1" y2="1"><stop offset="0" stop-color="#4a8ad6"/><stop offset="1" stop-color="#143c8c"/></linearGradient></defs><path d="M7.4 1.2H25.6Q27.4 1.2 27 3L22.6 20.8Q22.2 22.4 20.4 22.4H2.6Q.8 22.4 1.2 20.8L5.4 2.8Q5.8 1.2 7.4 1.2Z" fill="url(#psg)" stroke="#7fb2e6" stroke-width="1.2"/><path d="M8.6 5.6L15.6 11.4 7 17.4" fill="none" stroke="#fff" stroke-width="2.2"/><path d="M13.6 17.6H20" stroke="#dce8f8" stroke-width="1.8"/></svg><svg style="left:189px;top:735px" width="33" height="30"><defs><linearGradient id="fg" x1="0" y1="0" x2="1" y2="1"><stop offset="0" stop-color="#fdf0b8"/><stop offset="1" stop-color="#f2cf6a"/></linearGradient></defs><path d="M1.4 3Q1.4 1 3.4 1H15L17 3H22L24 5H29.4Q31.4 5 31.4 7V26.6H1.4Z" fill="#ecc56c" stroke="#d9ad4e" stroke-width=".8"/><rect x="4" y="1.8" width="3.6" height="2.2" fill="#1fae2c"/><rect x="8" y="2" width="6" height="2" fill="#fff"/><rect x="12.6" y="3.8" width="3.2" height="2.2" fill="#e02a22"/><rect x="16" y="4" width="5" height="2" fill="#fff"/><rect x="20.4" y="5.8" width="3.2" height="2.2" fill="#2a90e8"/><rect x="24" y="6" width="5" height="2" fill="#fff"/><path d="M1 8.4Q1 7 2.6 7H18L20 9H30Q31.6 9 31.6 10.6V26Q31.6 27.6 30 27.6H2.6Q1 27.6 1 26Z" fill="url(#fg)" stroke="#e2b85a" stroke-width=".8"/><path d="M4.6 28.6V18.4Q4.6 16.4 6.6 16.4H26Q28 16.4 28 18.4V28.6H22V22H10.6V28.6Z" fill="#9ad0f4" fill-opacity=".92" stroke="#e4f3fd" stroke-width="1"/><path d="M5.6 18.2H27" stroke="#d8eefc" stroke-width="1.4"/></svg><svg style="left:251px;top:733px" width="32" height="32" viewBox="0 0 32 32"><circle cx="16" cy="16" r="15.5" fill="#e8e8e8"/><path d="M16 16L2.6 8.2A15.5 15.5 0 0 1 29.4 8.2Z" fill="#e33b2e"/><path d="M16 16L29.4 8.2A15.5 15.5 0 0 1 16 31.5Z" fill="#f8cc1e"/><path d="M16 16L16 31.5A15.5 15.5 0 0 1 2.6 8.2Z" fill="#2da94f"/><path d="M16 9H29A15 15 0 0 0 3 8.5L9.5 19Z" fill="#e33b2e"/><path d="M22.2 19.5L16 31.5A15.5 15.5 0 0 0 29.3 8.5H16Z" fill="#f8cc1e"/><path d="M9.8 19.5L3 8.3A15.5 15.5 0 0 0 16 31.5L22.2 19.8Z" fill="#2da94f"/><circle cx="16" cy="16" r="7.3" fill="#fff"/><circle cx="16" cy="16" r="5.8" fill="#3f7fe8"/></svg><svg style="left:313px;top:733px" width="34" height="32"><defs><linearGradient id="gg" x1="0" y1="0" x2="1" y2="1"><stop offset="0" stop-color="#f4f8fc"/><stop offset=".55" stop-color="#c2d2e2"/><stop offset="1" stop-color="#8ea6c0"/></linearGradient></defs><path d="M22.0 13.3 L24.8 14.8 L24.1 17.0 L21.0 16.7 L19.6 18.7 L21.0 21.5 L19.2 22.9 L16.8 20.8 L14.6 21.6 L14.1 24.7 L11.8 24.8 L11.1 21.7 L8.8 21.0 L6.6 23.2 L4.6 21.9 L5.9 19.0 L4.5 17.1 L1.3 17.6 L0.6 15.4 L3.3 13.8 L3.2 11.5 L0.4 10.0 L1.1 7.8 L4.2 8.1 L5.6 6.1 L4.2 3.3 L6.0 1.9 L8.4 4.0 L10.6 3.2 L11.1 0.1 L13.4 0.0 L14.1 3.1 L16.4 3.8 L18.6 1.6 L20.6 2.9 L19.3 5.8 L20.7 7.7 L23.9 7.2 L24.6 9.4 L21.9 11.0Z M7.0 12.4 a5.6 5.6 0 1 0 11.2 0 a5.6 5.6 0 1 0 -11.2 0Z" fill="url(#gg)" fill-rule="evenodd" stroke="#8aa2ba" stroke-width=".7"/><path d="M29.7 24.6 L31.5 25.7 L30.8 27.2 L28.8 26.6 L27.7 27.6 L28.1 29.7 L26.6 30.2 L25.5 28.4 L24.0 28.3 L22.9 30.1 L21.4 29.4 L22.0 27.4 L21.0 26.3 L18.9 26.7 L18.4 25.2 L20.2 24.1 L20.3 22.6 L18.5 21.5 L19.2 20.0 L21.2 20.6 L22.3 19.6 L21.9 17.5 L23.4 17.0 L24.5 18.8 L26.0 18.9 L27.1 17.1 L28.6 17.8 L28.0 19.8 L29.0 20.9 L31.1 20.5 L31.6 22.0 L29.8 23.1Z M22.3 23.6 a2.7 2.7 0 1 0 5.4 0 a2.7 2.7 0 1 0 -5.4 0Z" fill="url(#gg)" fill-rule="evenodd" stroke="#8aa2ba" stroke-width=".6"/></svg><svg style="left:376px;top:733px" width="32" height="34"><defs><linearGradient id="cy" x1="0" x2="1"><stop offset="0" stop-color="#f6dc78"/><stop offset=".5" stop-color="#e8b828"/><stop offset="1" stop-color="#b8860c"/></linearGradient></defs><rect x="0" y="1.6" width="9.6" height="11.6" fill="url(#cy)"/><ellipse cx="4.8" cy="1.8" rx="4.8" ry="1.5" fill="#fbe9a0"/><ellipse cx="4.8" cy="13.2" rx="4.8" ry="1.5" fill="#c89a18"/><path d="M14.6 2H23.6V12M1 19V26H11" fill="none" stroke="#4e8e1e" stroke-width="2" stroke-dasharray="2 1.7"/><path d="M10.6 31.4L25.4 17" stroke="#d8a02c" stroke-width="2.6" stroke-linecap="round"/><path d="M19.6 14.6Q23 12.4 27 15.4L30.6 19.6 28 21.8 25.4 18.6Q23 17.4 21 18Z" fill="#d8dee6" stroke="#7e8a98" stroke-width=".7"/><path d="M25.6 31.2L15.4 20.4" stroke="#c9d1da" stroke-width="2.8" stroke-linecap="round"/><path d="M9.4 17.4Q9 14.4 12 13.4L12.6 16 15 16.6 16.6 14.6Q18.6 17 16.8 19.6 14.6 21.6 11.6 20.4Z" fill="#d4dbe3" stroke="#7e8a98" stroke-width=".7"/></svg><svg style="left:438px;top:733.5px" width="30" height="30"><circle cx="15" cy="15" r="15" fill="#fb0712"/><path d="M10 10.2C7.2 8.4 4 10.6 4 15s3.2 6.6 6 4.8" fill="none" stroke="#fff" stroke-width="3.2"/><path d="M13 19.4V12.6L18 18.8V11.4" fill="none" stroke="#fff" stroke-width="2.6"/><path d="M27.4 9.6H22.2V20.4H27.4M22.2 15H26.6" fill="none" stroke="#fff" stroke-width="3"/></svg><svg style="left:845px;top:747px" width="8" height="4"><path d="M0 4L4 0 8 4Z" fill="#111"/></svg><svg style="left:864px;top:741px" width="18" height="16"><path d="M2 1V15" stroke="#1c2a30" stroke-width="2.6"/><path d="M2 1V15" stroke="#fff" stroke-width="1.3"/><path d="M3.4 1.8Q7 .4 9.6 2T16 2.6Q15 6.6 12 8.6 8 9.4 3.4 9.6Z" fill="#fff" stroke="#1c2a30" stroke-width=".9"/></svg><svg style="left:889px;top:741px" width="17" height="15"><rect x="5" y="3" width="10.6" height="7.6" fill="none" stroke="#1c2a30" stroke-width="2.6"/><rect x="5" y="3" width="10.6" height="7.6" fill="#66ccee" stroke="#fff" stroke-width="1.3"/><path d="M10.2 10.6V13.4M6.6 13.6H13.8" stroke="#fff" stroke-width="1.4"/><rect x="1" y="1" width="4.6" height="6.4" rx="1.6" fill="#66ccee" stroke="#fff" stroke-width="1.2"/><path d="M3.3 7.4V12H5.4" fill="none" stroke="#fff" stroke-width="1.2"/><circle cx="3.3" cy="3.6" r=".9" fill="#fff"/></svg><svg style="left:912px;top:740px" width="18" height="18"><path d="M1.6 6H3.8L7.8 1.8V15.2L3.8 11H1.6Z" fill="#66ccee" stroke="#1c2a30" stroke-width="2.2"/><path d="M1.6 6H3.8L7.8 1.8V15.2L3.8 11H1.6Z" fill="#9adcf2" stroke="#fff" stroke-width="1.1"/><circle cx="12" cy="12" r="4.6" fill="#e41c1c"/><path d="M10 10L14 14M14 10L10 14" stroke="#fff" stroke-width="1.5"/></svg><span class="t" style="left:962.70px;top:734.84px;font-size:12px;color:#111;transform:scaleX(0.8758);transform-origin:0 0;">09:01</span><span class="t" style="left:946.70px;top:751.84px;font-size:12px;color:#111;letter-spacing:-0.226px;">30/05/2025</span></body></html>
